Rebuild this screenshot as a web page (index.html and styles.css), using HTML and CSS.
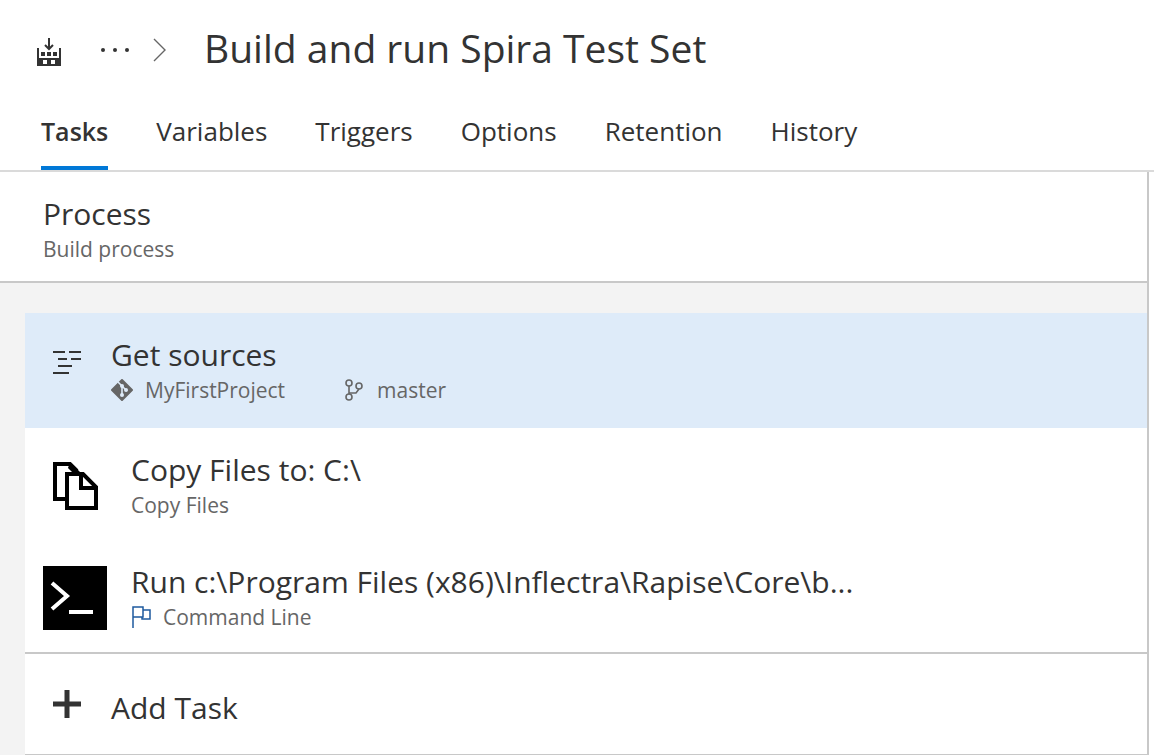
FILE: index.html
```html
<!DOCTYPE html>
<html lang="en">
<head>
<meta charset="utf-8">
<title>Build and run Spira Test Set</title>
<link rel="stylesheet" href="styles.css">
</head>
<body>
<header class="header">
  <div class="crumbs">
    <svg class="build-icon" viewBox="0 0 24 28" aria-hidden="true">
      <path fill="#333" d="M0 10h2v10h20V10h2v18H0zM4 14h4v4H4zM10 14h4v4h-4zM16 14h4v4h-4z"/>
      <path fill="#fff" d="M6 22h4v4H6zM14 22h4v4h-4z"/>
      <path fill="none" stroke="#333" stroke-width="2" d="M12 0v11M8 7l4 4 4-4"/>
    </svg>
    <button class="more" type="button" aria-label="More">
      <svg width="30" height="4" viewBox="0 0 30 4" fill="#333"><circle cx="3" cy="2" r="2"/><circle cx="15" cy="2" r="2"/><circle cx="27" cy="2" r="2"/></svg>
    </button>
    <svg class="chevron" viewBox="0 0 14 24" fill="none" stroke="#666" stroke-width="1.4" aria-hidden="true"><path d="M1 1l11 11L1 23"/></svg>
    <h1 class="title">Build and run Spira Test Set</h1>
  </div>
  <nav class="tabs">
    <a class="tab tab-active" href="#tasks">Tasks</a>
    <a class="tab" href="#variables">Variables</a>
    <a class="tab" href="#triggers">Triggers</a>
    <a class="tab" href="#options">Options</a>
    <a class="tab" href="#retention">Retention</a>
    <a class="tab" href="#history">History</a>
  </nav>
</header>
<main class="pane">
  <button class="process" type="button">
    <span class="name">Process</span>
    <span class="detail">Build process</span>
  </button>
  <div class="phase">
    <button class="row row-sources" type="button">
      <svg class="sources-icon" viewBox="0 0 28 24" stroke="#333" stroke-width="2" aria-hidden="true"><path d="M0 1h12M16 1h12M5 8h9M18 8h10M5 15h14M0 22h16"/></svg>
      <span class="text">
        <span class="name">Get sources</span>
        <span class="detail">
          <svg class="git-icon" viewBox="0 0 22 22" aria-hidden="true"><path fill="#666" stroke="#666" stroke-width="2" stroke-linejoin="round" d="M11 1l10 10-10 10L1 11z"/><path fill="none" stroke="#deebf9" stroke-width="1.6" d="M7 3l4 4v10M11 7l5 5"/><circle cx="11" cy="7" r="2" fill="#deebf9"/><circle cx="11" cy="16" r="2" fill="#deebf9"/><circle cx="15" cy="11" r="2" fill="#deebf9"/></svg>
          <span class="repo">MyFirstProject</span>
          <svg class="branch-icon" viewBox="0 0 18 22" fill="none" stroke="#666" stroke-width="1.6" aria-hidden="true"><circle cx="4" cy="4" r="3"/><circle cx="4" cy="18" r="3"/><circle cx="14" cy="7" r="3"/><path d="M4 7v8M14 10l-3 4H4"/></svg>
          <span>master</span>
        </span>
      </span>
    </button>
    <button class="row" type="button">
      <svg class="task-icon" viewBox="0 0 64 64" fill="none" stroke="#000" stroke-width="4" aria-hidden="true"><path d="M23 45H12V10h15l7 7"/><path d="M24 20h16l13 13v21H24z"/><path d="M38 20v14h14"/><path fill="#000" stroke="none" d="M27 8l12 12h-8l-6-6z"/></svg>
      <span class="text">
        <span class="name">Copy Files to: C:\</span>
        <span class="detail">Copy Files</span>
      </span>
    </button>
    <button class="row" type="button">
      <svg class="task-icon" viewBox="0 0 64 64" fill="none" stroke="#fff" stroke-width="4" aria-hidden="true"><path fill="#000" stroke="none" d="M0 0h64v64H0z"/><path d="M9 17l15 13L9 43M26 46h24"/></svg>
      <span class="text">
        <span class="name">Run c:\Program Files (x86)\Inflectra\Rapise\Core\b...</span>
        <span class="detail">
          <svg class="flag-icon" viewBox="0 0 20 22" fill="none" stroke="#1e5a9e" stroke-width="1.5" aria-hidden="true"><path d="M2 22V1h10v10H2M12 4h7v9h-8v-2"/></svg>
          <span>Command Line</span>
        </span>
      </span>
    </button>
    <button class="row row-add" type="button">
      <svg class="plus-icon" viewBox="0 0 28 28" stroke="#333" stroke-width="5" aria-hidden="true"><path d="M14 0v28M0 14h28"/></svg>
      <span class="name">Add Task</span>
    </button>
  </div>
</main>
</body>
</html>
```
FILE: styles.css
```css
* {
  box-sizing: border-box;
}

body {
  margin: 0;
  height: 100vh;
  overflow: hidden;
  display: flex;
  flex-direction: column;
  background: #fff;
  color: #333;
  font-family: "Segoe UI", "Open Sans", sans-serif;
}

button {
  margin: 0;
  padding: 0;
  border: 0;
  background: none;
  color: inherit;
  font: inherit;
  text-align: left;
}

svg {
  flex: none;
  display: block;
}

.header {
  flex: none;
  border-bottom: 2px solid #dadada;
}

.crumbs {
  display: flex;
  align-items: center;
  height: 100px;
  padding-left: 37px;
}

.build-icon {
  width: 24px;
  height: 28px;
  margin-top: 4px;
}

.more {
  margin-left: 39px;
}

.chevron {
  width: 14px;
  height: 24px;
  margin-left: 23px;
}

.title {
  margin: 0 0 4px 37px;
  font-size: 39px;
  font-weight: 400;
  line-height: 56px;
  white-space: nowrap;
}

.tabs {
  display: flex;
  gap: 48px;
  height: 70px;
  padding-left: 41px;
}

.tab {
  padding-top: 13px;
  color: inherit;
  font-size: 26px;
  line-height: 36px;
  text-decoration: none;
}

.tab-active {
  border-bottom: 4px solid #0078d7;
  font-size: 25px;
  font-weight: 600;
}

.pane {
  flex: 1 0 auto;
  display: flex;
  flex-direction: column;
  margin-right: 5px;
  border-right: 2px solid #c8c8c8;
  background: #f3f3f3;
}

.process {
  display: flex;
  flex-direction: column;
  padding: 22px 43px 17px;
  border-bottom: 2px solid #c8c8c8;
  background: #fff;
}

.phase {
  display: flex;
  flex-direction: column;
  margin: 30px 0 0 25px;
  background: #fff;
}

.name {
  font-size: 30px;
  line-height: 40px;
  white-space: nowrap;
}

.detail {
  display: flex;
  align-items: center;
  color: #666;
  font-size: 21px;
  line-height: 30px;
}

.row {
  display: flex;
  align-items: flex-start;
  height: 112px;
  padding: 22px 18px;
}

.text {
  display: flex;
  flex-direction: column;
}

.row-sources {
  height: 115px;
  padding-left: 28px;
  background: #deebf9;
}

.sources-icon {
  width: 28px;
  height: 24px;
  margin: 16px 30px 0 0;
}

.git-icon {
  width: 22px;
  height: 22px;
  margin-right: 12px;
}

.repo {
  margin-right: 60px;
}

.branch-icon {
  width: 18px;
  height: 22px;
  margin-right: 14px;
}

.task-icon {
  width: 64px;
  height: 64px;
  margin: 4px 24px 0 0;
}

.flag-icon {
  width: 20px;
  height: 22px;
  margin-right: 12px;
}

.row-add {
  height: 104px;
  padding: 30px 28px;
  border: solid #c8c8c8;
  border-width: 2px 0;
}

.plus-icon {
  width: 28px;
  height: 28px;
  margin: 6px 30px 0 0;
}

.row-add .name {
  padding-top: 4px;
}
```
